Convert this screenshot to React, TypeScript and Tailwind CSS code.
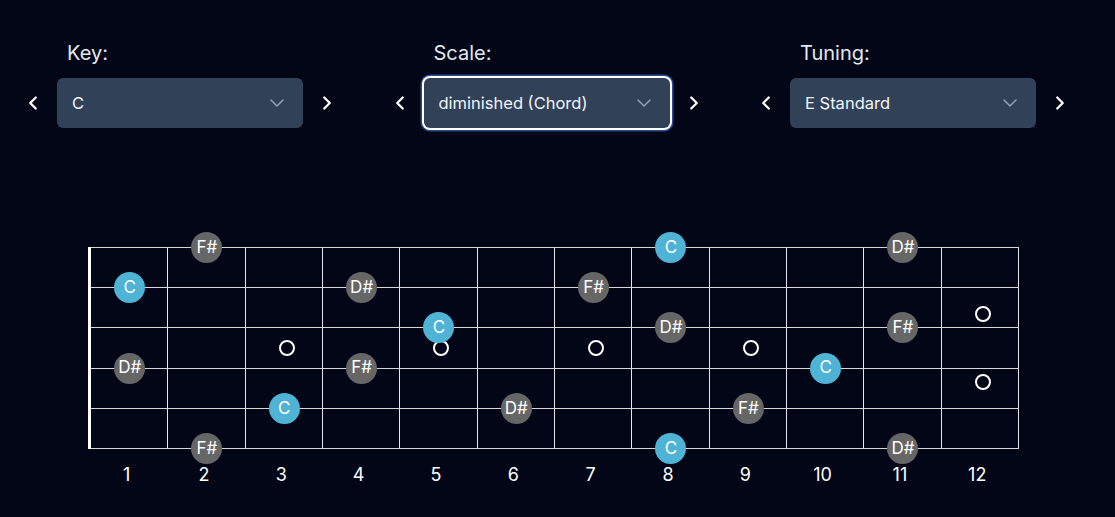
import { ChevronDown, ChevronLeft, ChevronRight } from "lucide-react";
import clsx from "clsx";

const NOTES = ["C", "C#", "D", "D#", "E", "F", "F#", "G", "G#", "A", "A#", "B"];
// high e on top, low E at the bottom
const TUNING = [4, 11, 7, 2, 9, 4];
const CHORD = ["C", "D#", "F#"];
const FRETS = Array.from({ length: 12 }, (_, i) => i + 1);

const Picker = ({ label, value, focused }: { label: string; value: string; focused?: boolean }) => (
  <div className="flex w-[342px] flex-col">
    <span className="mb-[11px] ml-[58px] text-xl leading-7 text-slate-200">{label}</span>
    <div className="flex items-center">
      <button className="flex h-[50px] w-12 items-center justify-center text-white">
        <ChevronLeft size={22} strokeWidth={2.5} />
      </button>
      <div
        className={clsx(
          "flex h-[50px] w-[246px] items-center justify-between rounded-md bg-slate-700 pl-[15px] pr-[14px] text-[16.5px] text-slate-100",
          focused && "ring-2 ring-white shadow-[0_0_0_3.5px_#2a4b8f]"
        )}
      >
        <span>{value}</span>
        <ChevronDown size={24} strokeWidth={1.5} className="text-slate-400" />
      </div>
      <button className="flex h-[50px] w-12 items-center justify-center text-white">
        <ChevronRight size={22} strokeWidth={2.5} />
      </button>
    </div>
  </div>
);

const Inlay = () => <div className="h-4 w-4 rounded-full border-2 border-white" />;

const App = () => {
  return (
    <div className="h-[517px] w-full overflow-hidden bg-[#020617] font-['Inter',sans-serif] text-white">
      <div className="flex gap-[24.5px] pl-[9px] pt-[39px]">
        <Picker label="Key:" value="C" />
        <Picker label="Scale:" value="diminished (Chord)" focused />
        <Picker label="Tuning:" value="E Standard" />
      </div>

      <div className="ml-[88px] mt-[119px] w-[931px]">
        <div className="relative h-[202px] border-l-[3px] border-white">
          {/* frets */}
          <div className="absolute inset-0 flex">
            {FRETS.map((f) => (
              <div key={f} className="flex-1 border-r border-[#e5e7eb]" />
            ))}
          </div>

          {/* inlays */}
          <div className="absolute inset-0 flex">
            {FRETS.map((f) => (
              <div key={f} className="flex flex-1 flex-col items-center justify-center gap-[52px] pl-[5px]">
                {[3, 5, 7, 9].includes(f) && <Inlay />}
                {f === 12 && (
                  <>
                    <Inlay />
                    <Inlay />
                  </>
                )}
              </div>
            ))}
          </div>

          {/* strings + notes */}
          <div className="absolute inset-0 flex flex-col justify-between">
            {TUNING.map((open, s) => (
              <div key={s} className="flex h-px bg-[#d9d9d9]">
                {FRETS.map((f) => {
                  const note = NOTES[(open + f) % 12];
                  const shown = CHORD.includes(note);
                  return (
                    <div key={f} className="flex flex-1 items-center justify-center">
                      {shown && (
                        <div
                          className={clsx(
                            "z-10 flex h-[31px] w-[31px] shrink-0 items-center justify-center rounded-full text-[17px] text-white",
                            note === "C" ? "bg-[#4fb3d6]" : "bg-[#666666]"
                          )}
                        >
                          {note}
                        </div>
                      )}
                    </div>
                  );
                })}
              </div>
            ))}
          </div>
        </div>

        <div className="mt-[14px] flex pr-[3px]">
          {FRETS.map((f) => (
            <span key={f} className="flex-1 text-center text-lg leading-6 text-white">
              {f}
            </span>
          ))}
        </div>
      </div>
    </div>
  );
};

export default App;
